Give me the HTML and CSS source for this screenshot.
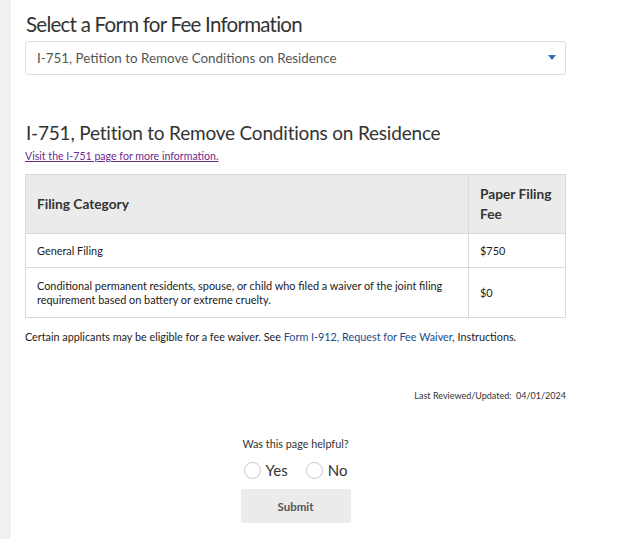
FILE: index.html
```html
<!DOCTYPE html>
<html lang="en">
<head>
  <meta charset="UTF-8" />
  <meta name="viewport" content="width=device-width, initial-scale=1.0" />
  <title>Fee Information</title>
  <link rel="stylesheet" href="styles.css">
</head>
<body>
  <div class="page">
    <div class="rail"></div>

    <main class="content">
      <h1>Select a Form for Fee Information</h1>
      <div class="picker">
        <span>I-751, Petition to Remove Conditions on Residence</span>
        <svg class="caret" width="8" height="5" viewBox="0 0 8 5"><path d="M0 0h8L4 5z" fill="#2e6fb8"/></svg>
      </div>

      <h2>I-751, Petition to Remove Conditions on Residence</h2>
      <a class="more" href="#">Visit the I-751 page for more information.</a>

      <table class="fees">
        <thead>
          <tr>
            <th>Filing Category</th>
            <th class="fee">Paper Filing Fee</th>
          </tr>
        </thead>
        <tbody>
          <tr>
            <td>General Filing</td>
            <td>$750</td>
          </tr>
          <tr>
            <td>Conditional permanent residents, spouse, or child who filed a waiver of the joint filing requirement based on battery or extreme cruelty.</td>
            <td>$0</td>
          </tr>
        </tbody>
      </table>

      <p class="note">Certain applicants may be eligible for a fee waiver. See <a href="#">Form I-912, Request for Fee Waiver</a>, Instructions.</p>

      <p class="updated">Last Reviewed/Updated:&nbsp; 04/01/2024</p>

      <form class="helpful">
        <p>Was this page helpful?</p>
        <div class="choices">
          <label><span class="radio"></span>Yes</label>
          <label><span class="radio"></span>No</label>
        </div>
        <button type="button">Submit</button>
      </form>
    </main>
  </div>
</body>
</html>
```

FILE: styles.css
```css
body {
  margin: 0;
  font-family: 'Lato', 'Liberation Sans', sans-serif;
  color: #1b1b1b;
  background: #fff;
}

.page {
  display: flex;
  min-height: 539px;
}

.rail {
  width: 11px;
  background: #f1f1f1;
  flex-shrink: 0;
}

.content {
  width: 541px;
  padding-left: 14px;
}

h1 {
  margin: 11px 0 0 1px;
  font-size: 20.5px;
  font-weight: 400;
  letter-spacing: -0.75px;
  color: #333;
  line-height: 26px;
}

.picker {
  margin-top: 4px;
  height: 32px;
  border: 1px solid #dcdcdc;
  border-radius: 3px;
  display: flex;
  align-items: center;
  justify-content: space-between;
  padding: 0 9px 0 11px;
  font-size: 13.4px;
  color: #555;
}

.caret {
  margin-top: -2px;
}

h2 {
  margin: 46px 0 0 1px;
  font-size: 19px;
  font-weight: 400;
  letter-spacing: -0.2px;
  color: #333;
  line-height: 24px;
}

.more {
  display: block;
  margin-top: 4px;
  font-size: 10.6px;
  color: #6c2a8f;
  line-height: 14px;
}

.fees {
  margin-top: 11px;
  width: 541px;
  border-collapse: collapse;
  font-size: 10.9px;
  color: #1b1b1b;
}

.fees th,
.fees td {
  border: 1px solid #d9d9d9;
  text-align: left;
  padding: 0 11px;
}

.fees th {
  background: #ebebeb;
  height: 58px;
  font-size: 13.7px;
  line-height: 20px;
  color: #333;
}

.fees th.fee {
  width: 74px;
}

.fees td {
  height: 33px;
  line-height: 14px;
}

.fees tbody tr:last-child td {
  height: 49px;
}

.note {
  margin: 11px 0 0;
  font-size: 10.8px;
  line-height: 16px;
}

.note a {
  color: #1a4b8c;
  text-decoration: none;
}

.updated {
  margin: 45px 0 0;
  text-align: right;
  font-size: 9px;
  color: #333;
}

.helpful {
  margin-top: 36px;
  display: flex;
  flex-direction: column;
  align-items: center;
}

.helpful p {
  margin: 0;
  font-size: 10.8px;
  color: #333;
}

.choices {
  display: flex;
  gap: 18px;
  margin-top: 11px;
  font-size: 15px;
  color: #333;
}

.choices label {
  display: flex;
  align-items: center;
  gap: 5px;
}

.radio {
  width: 15px;
  height: 15px;
  border: 1px solid #c8c8c8;
  border-radius: 50%;
}

button {
  margin-top: 10px;
  width: 110px;
  height: 34px;
  border: none;
  border-radius: 3px;
  background: #ebebeb;
  font-family: inherit;
  font-size: 11.5px;
  font-weight: 700;
  color: #555;
}
```
